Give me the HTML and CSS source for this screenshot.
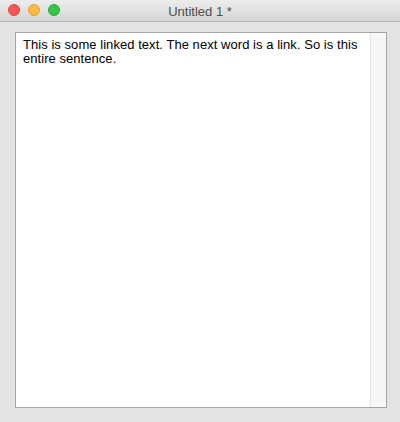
FILE: index.html
```html
<!DOCTYPE html>
<html lang="en">
<head>
    <meta charset="UTF-8">
    <title>Untitled 1 *</title>
    <link rel="stylesheet" href="styles.css">
</head>
<body>
    <div class="window">
        <div class="titlebar">
            <div class="lights">
                <span class="light close"></span>
                <span class="light min"></span>
                <span class="light max"></span>
            </div>
            <div class="title">Untitled 1 *</div>
        </div>
        <div class="content">
            <div class="textview">
                <div class="text">This is some linked text. The next word is a link. So is this entire sentence.</div>
                <div class="scrolltrack"></div>
            </div>
        </div>
    </div>
</body>
</html>
```

FILE: styles.css
```css
body {
  margin: 0;
  font-family: "Liberation Sans", Arial, sans-serif;
  background-color: #e3e3e3;
}
.window {
  width: 400px;
  height: 422px;
  display: flex;
  flex-direction: column;
  background-color: #e3e3e3;
}
.titlebar {
  position: relative;
  height: 21px;
  border-bottom: 1px solid #b9b9b9;
  background: linear-gradient(#ededed, #d5d5d5);
  display: flex;
  align-items: center;
  justify-content: center;
}
.lights {
  position: absolute;
  left: 8px;
  top: 4px;
  display: flex;
  gap: 8px;
}
.light {
  width: 12px;
  height: 12px;
  border-radius: 50%;
  box-sizing: border-box;
}
.close {
  background-color: #fc5753;
  border: 1px solid #de4542;
}
.min {
  background-color: #fdbc40;
  border: 1px solid #de9f34;
}
.max {
  background-color: #33c748;
  border: 1px solid #27aa35;
}
.title {
  font-size: 13px;
  color: #4d4d4d;
  padding-top: 1px;
}
.content {
  flex: 1;
  padding: 10px 13px 13px 15px;
}
.textview {
  height: 376px;
  border: 1px solid #a5a5a5;
  background-color: #ffffff;
  display: flex;
  box-sizing: border-box;
}
.text {
  flex: 1;
  padding: 5px 7px 4px;
  font-size: 13px;
  line-height: 14px;
  letter-spacing: 0.05px;
  color: #000;
}
.scrolltrack {
  width: 15px;
  background-color: #f6f6f6;
  border-left: 1px solid #e6e6e6;
}
```
